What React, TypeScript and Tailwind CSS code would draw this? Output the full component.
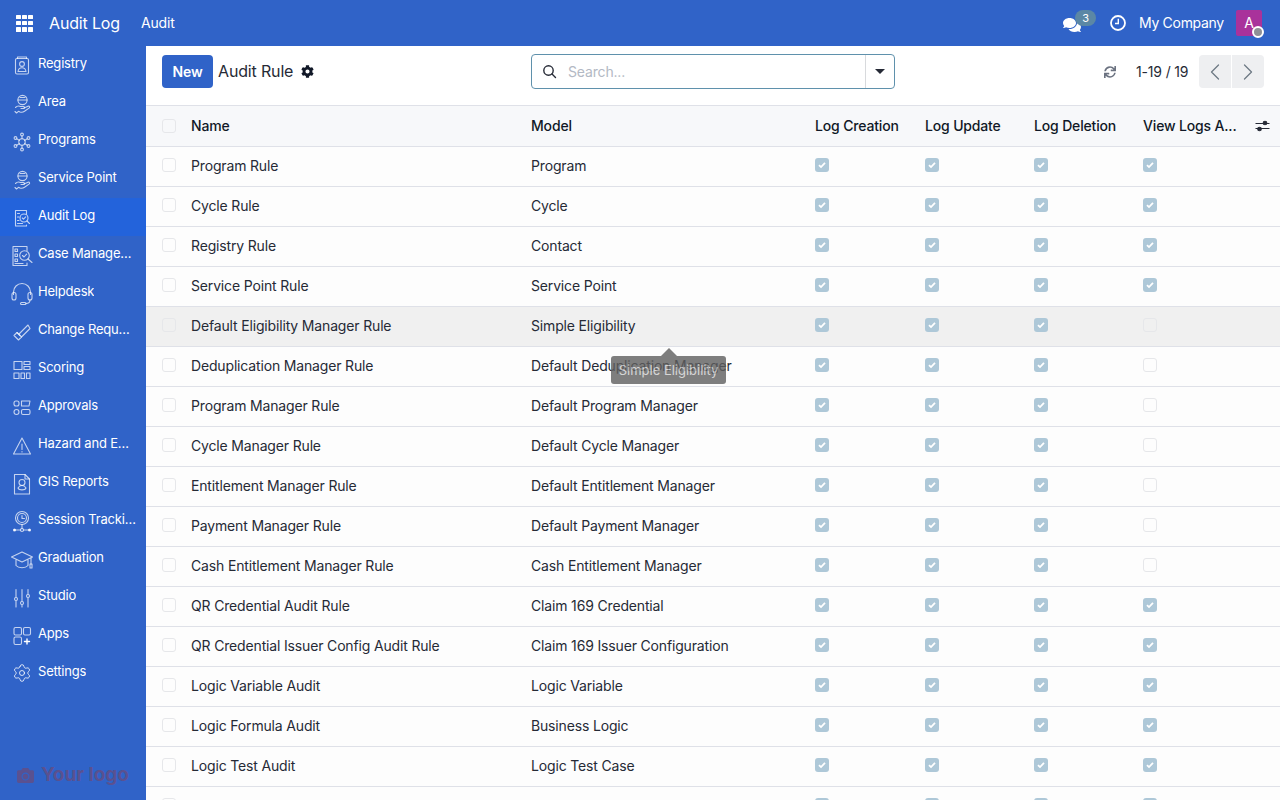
import React from "react"
import { ChevronLeft, ChevronRight, Settings } from "lucide-react"
import { FaCamera, FaCog, FaComments, FaSync } from "react-icons/fa"

function Line({ children, size = 24 }: { children: React.ReactNode; size?: number }) {
  return (
    <svg width={size} height={size} viewBox="0 0 24 24" fill="none" stroke="#ffffff" strokeOpacity="0.72" strokeWidth="1.1" strokeLinecap="round" strokeLinejoin="round">
      {children}
    </svg>
  )
}

const RegistryIcon = () => (
  <Line>
    <rect x="5.5" y="4.5" width="13" height="15.5" rx="1.5" />
    <path d="M7.5 4.5V3h9v1.5" />
    <circle cx="12" cy="10" r="2.4" />
    <path d="M8 17.5c.4-2.6 2-3.8 4-3.8s3.6 1.2 4 3.8z" />
  </Line>
)
const HandPersonIcon = () => (
  <Line>
    <circle cx="12.5" cy="8" r="4.6" />
    <path d="M8 8h9M10 5.5h5" />
    <path d="M5.5 15.5c1.5-1.6 3.4-1.8 5-1h3c1.4 0 1.4 2-.2 2H11" />
    <path d="M14 16l4-1.8c1.5-.5 2.2 1 1 1.9l-4.5 3.2c-1.500 1-3 1.200-4.500.7L8.500 19.300 6.500 21 5 19.500" />
  </Line>
)
const ProgramsIcon = () => (
  <Line>
    <circle cx="12" cy="12" r="3.2" />
    <circle cx="12" cy="4.500" r="1.400" />
    <circle cx="12" cy="19.500" r="1.400" />
    <circle cx="5.500" cy="8" r="1.400" />
    <circle cx="18.500" cy="8" r="1.400" />
    <circle cx="5.500" cy="16" r="1.400" />
    <circle cx="18.500" cy="16" r="1.400" />
    <path d="M12 6v2.800M12 15.200V18M6.800 8.800l2.500 1.600M17.200 8.800l-2.500 1.600M6.800 15.200l2.500-1.600M17.200 15.200l-2.500-1.600" />
  </Line>
)
const AuditIcon = () => (
  <Line>
    <path d="M16.500 8V4.500h-11V20h11v-1" />
    <path d="M7.500 7.500h2M7.500 11h1.500M7.500 14.500h1.500M7.500 17.500h5" />
    <circle cx="14" cy="12" r="4" />
    <path d="M12.300 12l1.200 1.200 2.200-2.400M17 15l2.500 2.500" />
  </Line>
)
const CaseIcon = () => (
  <Line size={26}>
    <path d="M17 6.500V2.500H3v19h14v-2.500" />
    <rect x="5" y="5" width="2.500" height="2.500" />
    <rect x="5" y="10" width="2.500" height="2.500" />
    <rect x="5" y="15" width="2.500" height="2.500" />
    <path d="M5 19.500h8" />
    <circle cx="14.500" cy="11.500" r="4.800" />
    <path d="M12.500 11.500l1.500 1.500 2.600-2.800M18 15l4 3.500" />
  </Line>
)
const HelpdeskIcon = () => (
  <Line size={26}>
    <path d="M3.500 12.500V10a8.500 8.500 0 0 1 17 0v2.500" />
    <rect x="2" y="10.500" width="4" height="7.500" rx="2" />
    <rect x="18" y="10.500" width="4" height="7.500" rx="2" />
    <path d="M20 18c0 2.500-1.500 3.500-4 3.500" />
    <rect x="10.500" y="20.500" width="5.500" height="2" rx="1" />
  </Line>
)
const ChangeIcon = () => (
  <Line>
    <path d="M4 15.500l3-3 4.500 4.500-3 3z" />
    <path d="M11.500 17L20 8.500 18 5l-8.500 8.500" />
    <path d="M7 12.500l3 3" />
  </Line>
)
const ScoringIcon = () => (
  <Line>
    <rect x="4" y="3.500" width="8" height="8" />
    <rect x="14" y="3.500" width="6" height="3" />
    <rect x="14" y="8.500" width="6" height="3" />
    <rect x="4" y="15" width="5" height="5.500" />
    <rect x="11" y="15" width="3.500" height="5.500" />
    <rect x="16.500" y="15" width="3.500" height="5.500" />
  </Line>
)
const ApprovalsIcon = () => (
  <Line>
    <rect x="4" y="5" width="5" height="5" rx="2" />
    <path d="M11.500 5H20l-1 5h-7.500z" />
    <rect x="4" y="13.500" width="5" height="5" rx="2.500" />
    <rect x="11.500" y="13.500" width="8.500" height="5" rx="1.500" />
  </Line>
)
const HazardIcon = () => (
  <Line>
    <path d="M12 4L3.500 20h17z" />
    <path d="M12 10v5.500M12 17.500v.5" />
  </Line>
)
const GisIcon = () => (
  <Line>
    <path d="M4.500 2.500H15l4.500 4.500v15h-15z" />
    <path d="M15 2.500V7h4.500" />
    <circle cx="12" cy="10.500" r="3" />
    <path d="M8 16c1-2 2.500-2.500 4-2.500s3 .5 4 2.500c-1 2.500-7 2.500-8 0z" />
  </Line>
)
const SessionIcon = () => (
  <Line size={26}>
    <circle cx="12" cy="8" r="6.500" />
    <circle cx="12" cy="8" r="4.500" />
    <path d="M12 5.500V8.500h2.500" />
    <path d="M12 14.500v4" />
    <circle cx="12" cy="20" r="1.500" />
    <path d="M5 20h5.500M13.500 20H19" />
    <circle cx="4.500" cy="20" r="1" fill="#ffffff" />
    <circle cx="19.500" cy="20" r="1" fill="#ffffff" />
  </Line>
)
const GraduationIcon = () => (
  <Line size={26}>
    <path d="M12 4L1.500 9 12 14l10.500-5z" />
    <path d="M6 12v5.500c2.500 3 9.500 3 12 0V12" />
    <path d="M21 10v6" />
    <rect x="20" y="16" width="2" height="4" />
  </Line>
)
const StudioIcon = () => (
  <Line>
    <path d="M6 3.500V11M6 15v6M12 3.500V15M12 19v2M18 3.500V8M18 12v9" />
    <circle cx="6" cy="13" r="1.500" />
    <circle cx="12" cy="17" r="1.500" />
    <circle cx="18" cy="10" r="1.500" />
  </Line>
)
const AppsIcon = () => (
  <Line>
    <rect x="4" y="3.500" width="7.500" height="7.500" rx="1.500" />
    <rect x="13.500" y="3.500" width="7" height="7.500" rx="1.500" />
    <rect x="4" y="13" width="7.500" height="7.500" rx="1.500" />
    <path d="M17 15v5M14.500 17.500h5" strokeWidth="1.400" strokeOpacity="1" />
  </Line>
)
const SettingsIcon = () => <Settings size={20} strokeWidth={1.200} className="text-white/80 -mt-[2px]" />

const menu: { label: string; icon: React.ReactNode; active?: boolean }[] = [
  { label: "Registry", icon: <RegistryIcon /> },
  { label: "Area", icon: <HandPersonIcon /> },
  { label: "Programs", icon: <ProgramsIcon /> },
  { label: "Service Point", icon: <HandPersonIcon /> },
  { label: "Audit Log", icon: <AuditIcon />, active: true },
  { label: "Case Management", icon: <CaseIcon /> },
  { label: "Helpdesk", icon: <HelpdeskIcon /> },
  { label: "Change Request", icon: <ChangeIcon /> },
  { label: "Scoring", icon: <ScoringIcon /> },
  { label: "Approvals", icon: <ApprovalsIcon /> },
  { label: "Hazard and Emergency", icon: <HazardIcon /> },
  { label: "GIS Reports", icon: <GisIcon /> },
  { label: "Session Tracking", icon: <SessionIcon /> },
  { label: "Graduation", icon: <GraduationIcon /> },
  { label: "Studio", icon: <StudioIcon /> },
  { label: "Apps", icon: <AppsIcon /> },
  { label: "Settings", icon: <SettingsIcon /> },
]

// name, model, view logs access
const rules: [string, string, boolean][] = [
  ["Program Rule", "Program", true],
  ["Cycle Rule", "Cycle", true],
  ["Registry Rule", "Contact", true],
  ["Service Point Rule", "Service Point", true],
  ["Default Eligibility Manager Rule", "Simple Eligibility", false],
  ["Deduplication Manager Rule", "Default Deduplication Manager", false],
  ["Program Manager Rule", "Default Program Manager", false],
  ["Cycle Manager Rule", "Default Cycle Manager", false],
  ["Entitlement Manager Rule", "Default Entitlement Manager", false],
  ["Payment Manager Rule", "Default Payment Manager", false],
  ["Cash Entitlement Manager Rule", "Cash Entitlement Manager", false],
  ["QR Credential Audit Rule", "Claim 169 Credential", true],
  ["QR Credential Issuer Config Audit Rule", "Claim 169 Issuer Configuration", true],
  ["Logic Variable Audit", "Logic Variable", true],
  ["Logic Formula Audit", "Business Logic", true],
  ["Logic Test Audit", "Logic Test Case", true],
  ["", "", true],
]

const gridCols = "grid grid-cols-[45px_340px_284px_110px_109px_109px_1fr] items-center"

function Check({ on }: { on?: boolean }) {
  if (!on) return <span className="block w-[14px] h-[14px] rounded-[3px] border border-[#e6e7ea]" />
  return (
    <span className="flex w-[14px] h-[14px] rounded-[3px] bg-[#aec8d8] items-center justify-center">
      <svg width="10" height="10" viewBox="0 0 10 10" fill="none" stroke="#ffffff" strokeWidth="1.800">
        <path d="M2 5.200l2 1.900 4-4.200" />
      </svg>
    </span>
  )
}

function Row({ name, model, view, hover }: { name: string; model: string; view: boolean; hover?: boolean }) {
  return (
    <div className={`${gridCols} h-10 shrink-0 border-b border-[#dfe1e8] ${hover ? "bg-[#f0f0f0]" : "bg-[#fdfdfd]"}`}>
      <div className="pl-4 -mt-[4px]"><Check /></div>
      <div className="truncate -mt-[2px]">{name}</div>
      <div className="truncate -mt-[2px]">{model}</div>
      <div className="-mt-[4px]"><Check on /></div>
      <div className="-mt-[4px]"><Check on /></div>
      <div className="-mt-[4px]"><Check on /></div>
      <div className="-mt-[4px]"><Check on={view} /></div>
    </div>
  )
}

export default function App() {
  return (
    <div className="h-screen w-[1280px] flex flex-col overflow-hidden bg-white text-[14px] tracking-[-0.16px] text-[#262a36] font-['Inter',sans-serif]">
      {/* Top bar */}
      <header className="h-[46px] shrink-0 bg-[#3063c8] text-white flex items-center">
        <div className="ml-4 grid grid-cols-3 gap-[1.500px] w-[17px] h-[17px]">
          {Array.from({ length: 9 }).map((_, i) => (
            <span key={i} className="bg-white rounded-[0.500px]" />
          ))}
        </div>
        <span className="ml-4 text-[16px] -mt-[1px]">Audit Log</span>
        <span className="ml-[21px] -mt-[1px]">Audit</span>
        <div className="ml-auto flex items-center">
          <div className="relative w-[34px] h-[26px] flex items-center">
            <FaComments className="w-[18px] h-[18px] mt-[3px]" />
            <span className="absolute left-[12px] top-0 w-[21px] h-[16px] rounded-full bg-[#5b87a5] text-[11px] leading-[16px] text-center">3</span>
          </div>
          <svg className="ml-[13px]" width="16" height="16" viewBox="0 0 16 16" fill="none" stroke="#ffffff">
            <circle cx="8" cy="8" r="7" strokeWidth="1.800" />
            <path d="M8.300 3.800V8.500H5" strokeWidth="1.400" />
          </svg>
          <span className="ml-[13px] w-[84px] whitespace-nowrap tracking-[-0.3px] -mt-[1px]">My Company</span>
          <div className="relative ml-[13px] mr-[18px] w-[26px] h-[26px] rounded-[2px] bg-[#a9329b] text-center leading-[26px]">
            A
            <span className="absolute -right-[2px] -bottom-[2px] w-[12px] h-[12px] rounded-full bg-[#8e9096] border-2 border-white" />
          </div>
        </div>
      </header>

      <div className="flex flex-1 min-h-0">
        {/* Sidebar */}
        <aside className="w-[146px] shrink-0 bg-[#3063c8] text-white text-[13px] tracking-[-0.2px] flex flex-col">
          <nav className="flex flex-col">
            {menu.map((m) => (
              <div key={m.label} className={`h-[38px] flex items-center pl-[10px] pr-[10px] ${m.active ? "bg-[#2363db]" : ""}`}>
                <span className="w-6 h-6 mt-[2px] shrink-0 flex items-center justify-center">{m.icon}</span>
                <span className="ml-1 truncate -mt-[2px]">{m.label}</span>
              </div>
            ))}
          </nav>
          <div className="mt-auto mb-[13px] ml-[17px] flex items-center text-[#5a5190]">
            <FaCamera className="w-[17px] h-[17px]" />
            <span className="ml-[7px] text-[19px] font-bold leading-[24px] tracking-normal">Your logo</span>
          </div>
        </aside>

        {/* Main */}
        <main className="relative flex-1 min-w-0 flex flex-col overflow-hidden">
          <div className="h-[60px] shrink-0 border-b border-[#dfe1e8] flex items-center pl-4 pr-4 pb-2 whitespace-nowrap">
            <button className="w-[51px] h-[33px] shrink-0 rounded-[4px] bg-[#3063c8] text-white font-semibold">New</button>
            <span className="ml-[5px] w-[76px] shrink-0 text-[16px] -mt-[1px]">Audit Rule</span>
            <FaCog className="ml-[7px] shrink-0 w-[13px] h-[13px] text-[#111827]" />
            <div className="ml-[217px] w-[364px] shrink-0 h-[35px] rounded-[4px] border border-[#5f91ac] flex items-center">
              <svg className="ml-[10px]" width="15" height="15" viewBox="0 0 15 15" fill="none" stroke="#262a36" strokeWidth="1.400">
                <circle cx="6.500" cy="6.500" r="4.700" />
                <path d="M10 10l3.500 3.500" strokeLinecap="round" />
              </svg>
              <span className="ml-[11px] text-[#b3b9c4]">Search...</span>
              <div className="ml-auto h-full w-[29px] border-l border-[#d8dadd] flex items-center justify-center">
                <span className="w-0 h-0 border-x-[5px] border-x-transparent border-t-[5px] border-t-[#262a36]" />
              </div>
            </div>
            <FaSync className="ml-[209px] shrink-0 w-[12px] h-[12px] text-[#6b7280]" />
            <span className="ml-[20px] w-[55px] shrink-0">1-19 / 19</span>
            <div className="ml-2 flex h-[33px] gap-px">
              <span className="w-8 rounded-l-[4px] bg-[#eeeff1] flex items-center justify-center text-[#6e7a85]">
                <ChevronLeft size={28} strokeWidth={1.100} />
              </span>
              <span className="w-8 rounded-r-[4px] bg-[#eeeff1] flex items-center justify-center text-[#6e7a85]">
                <ChevronRight size={28} strokeWidth={1.100} />
              </span>
            </div>
          </div>

          {/* List */}
          <div className={`${gridCols} h-[41px] shrink-0 bg-[#f7f8fa] border-b border-[#dfe1e8] font-medium text-[#111827]`}>
            <div className="pl-4"><Check /></div>
            <div className="-mt-[1px]">Name</div>
            <div className="-mt-[1px]">Model</div>
            <div className="-mt-[1px]">Log Creation</div>
            <div className="-mt-[1px]">Log Update</div>
            <div className="-mt-[1px]">Log Deletion</div>
            <div className="flex items-center justify-between pr-[10px] -mt-[1px]">
              <span>View Logs A...</span>
              <svg width="15" height="14" viewBox="0 0 15 14" fill="#262a36" stroke="#262a36" strokeWidth="1.100">
                <path d="M0.500 4.500h14M0.500 9.500h14" />
                <circle cx="10" cy="4" r="1.800" />
                <circle cx="4.500" cy="10" r="1.800" />
              </svg>
            </div>
          </div>
          {rules.map((r, i) => (
            <Row key={i} name={r[0]} model={r[1]} view={r[2]} hover={i === 4} />
          ))}

          {/* Tooltip fading in over the row below the hovered cell */}
          <div className="absolute left-[465px] top-[302px] flex flex-col items-center opacity-80">
            <span className="w-0 h-0 border-x-[8px] border-x-transparent border-b-[8px] border-b-[#5f5f5f]" />
            <span className="w-[115px] h-[28px] rounded-[3px] bg-[#5f5f5f] text-center text-[13px] tracking-normal leading-[28px] text-white/70">Simple Eligibility</span>
          </div>
        </main>
      </div>
    </div>
  )
}
